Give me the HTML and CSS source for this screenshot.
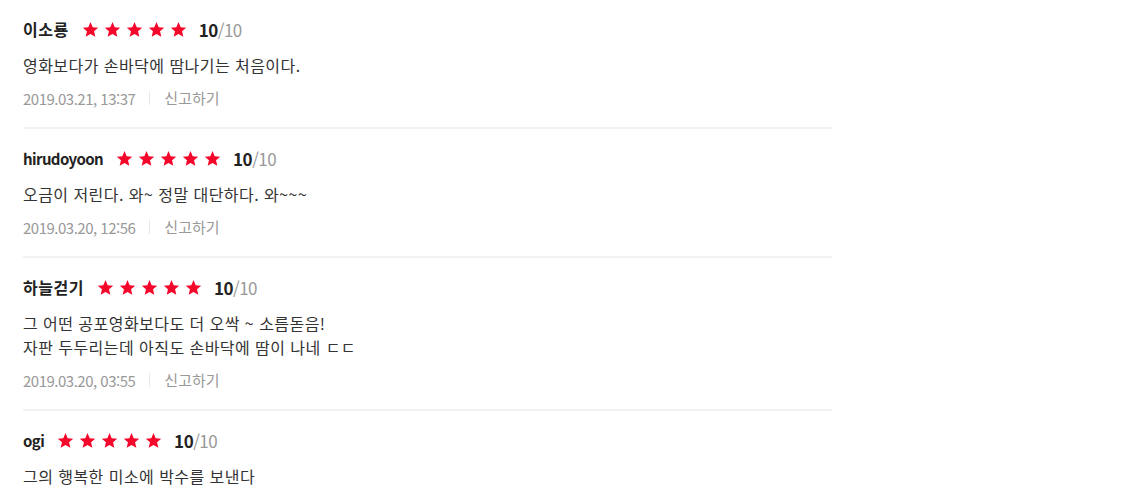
FILE: index.html
```html
<!DOCTYPE html>
<html lang="ko">
<head>
    <meta charset="UTF-8">
    <meta name="viewport" content="width=device-width, initial-scale=1.0">
    <title>관람평</title>
    <link rel="stylesheet" href="styles.css">
</head>
<body>
    <svg width="0" height="0" class="defs">
        <defs>
            <symbol id="star" viewBox="0 0 24 24">
                <path d="M12 1.5l3.1 7.2 7.8.7-5.9 5.2 1.8 7.7L12 18.3l-6.8 4 1.8-7.7-5.9-5.2 7.8-.7z"/>
            </symbol>
        </defs>
    </svg>

    <ul class="review-list">
        <li class="review">
            <div class="review-head">
                <strong class="name">이소룡</strong>
                <span class="stars">
                    <svg><use href="#star"/></svg><svg><use href="#star"/></svg><svg><use href="#star"/></svg><svg><use href="#star"/></svg><svg><use href="#star"/></svg>
                </span>
                <span class="score"><b>10</b>/10</span>
            </div>
            <p class="review-text">영화보다가 손바닥에 땀나기는 처음이다.</p>
            <div class="review-meta">
                <span class="date">2019.03.21, 13:37</span>
                <a class="report" href="#">신고하기</a>
            </div>
        </li>
        <li class="review">
            <div class="review-head">
                <strong class="name latin">hirudoyoon</strong>
                <span class="stars">
                    <svg><use href="#star"/></svg><svg><use href="#star"/></svg><svg><use href="#star"/></svg><svg><use href="#star"/></svg><svg><use href="#star"/></svg>
                </span>
                <span class="score"><b>10</b>/10</span>
            </div>
            <p class="review-text">오금이 저린다. 와~ 정말 대단하다. 와~~~</p>
            <div class="review-meta">
                <span class="date">2019.03.20, 12:56</span>
                <a class="report" href="#">신고하기</a>
            </div>
        </li>
        <li class="review">
            <div class="review-head">
                <strong class="name">하늘걷기</strong>
                <span class="stars">
                    <svg><use href="#star"/></svg><svg><use href="#star"/></svg><svg><use href="#star"/></svg><svg><use href="#star"/></svg><svg><use href="#star"/></svg>
                </span>
                <span class="score"><b>10</b>/10</span>
            </div>
            <p class="review-text">그 어떤 공포영화보다도 더 오싹 ~ 소름돋음!<br>자판 두두리는데 아직도 손바닥에 땀이 나네 ㄷㄷ</p>
            <div class="review-meta">
                <span class="date">2019.03.20, 03:55</span>
                <a class="report" href="#">신고하기</a>
            </div>
        </li>
        <li class="review">
            <div class="review-head">
                <strong class="name latin">ogi</strong>
                <span class="stars">
                    <svg><use href="#star"/></svg><svg><use href="#star"/></svg><svg><use href="#star"/></svg><svg><use href="#star"/></svg><svg><use href="#star"/></svg>
                </span>
                <span class="score"><b>10</b>/10</span>
            </div>
            <p class="review-text">그의 행복한 미소에 박수를 보낸다</p>
        </li>
    </ul>
</body>
</html>
```

FILE: styles.css
```css
body {
    font-family: "Noto Sans CJK KR", "Noto Sans", sans-serif;
    background: #fff;
    color: #333;
    margin: 0;
    padding: 0 0 0 23px;
}
.defs {
    position: absolute;
}
.review-list {
    list-style: none;
    margin: 0;
    padding: 0;
    width: 809px;
}
.review {
    padding: 17px 0 19px;
    border-bottom: 2px solid #f2f2f2;
}
.review-head {
    display: flex;
    align-items: center;
    height: 24px;
}
.name {
    font-size: 16px;
    font-weight: bold;
    color: #222;
    letter-spacing: 0.5px;
    margin-right: 13px;
}
.name.latin {
    font-size: 15px;
    letter-spacing: -0.6px;
}
.stars {
    display: flex;
    gap: 5px;
    margin-right: 12px;
}
.stars svg {
    width: 17px;
    height: 17px;
    fill: #f5072b;
}
.score {
    font-size: 17px;
    color: #999;
    letter-spacing: -0.5px;
}
.score b {
    color: #222;
}
.review-text {
    margin: 12px 0 0;
    font-size: 16px;
    letter-spacing: 0.45px;
    line-height: 24px;
    color: #333;
}
.review-meta {
    display: flex;
    align-items: center;
    margin-top: 11px;
    height: 20px;
    font-size: 14px;
    color: #999;
}
.date {
    font-size: 15px;
    letter-spacing: -0.5px;
}
.report {
    color: #999;
    font-size: 15px;
    text-decoration: none;
    margin-left: 14px;
    padding-left: 14px;
    border-left: 1px solid #e8e8e8;
    line-height: 14px;
}
```
